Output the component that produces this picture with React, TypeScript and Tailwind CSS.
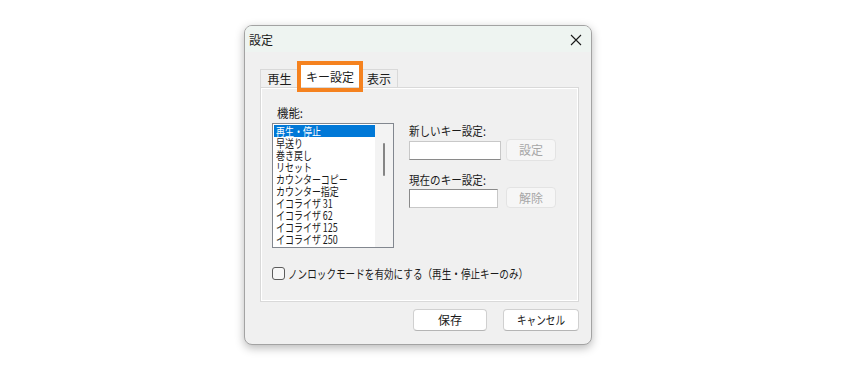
import React from "react";

const items = [
  "再生・停止",
  "早送り",
  "巻き戻し",
  "リセット",
  "カウンターコピー",
  "カウンター指定",
  "イコライザ 31",
  "イコライザ 62",
  "イコライザ 125",
  "イコライザ 250",
];

function N({ children, s }: { children: React.ReactNode; s: string }) {
  return <span className={`inline-block whitespace-nowrap origin-left ${s}`}>{children}</span>;
}

export default function App() {
  return (
    <div className="w-[861px] h-[369px] bg-white pt-[25px] pl-[244px] font-['Noto_Sans_CJK_JP',sans-serif] text-[12px] text-[#1a1a1a] leading-[12px]">
      <div className="w-[348px] h-[320px] rounded-[8px] border border-[#a3a3a3] bg-[#f0f0f0] shadow-[0_3px_10px_rgba(0,0,0,0.28)] overflow-hidden flex flex-col">
        {/* title bar */}
        <div className="h-[26px] bg-[#eef4f1] flex items-center justify-between pl-[4px] pr-[9px]">
          <span className="mt-[1px]">設定</span>
          <svg width="12" height="12" viewBox="0 0 12 12" className="mt-[1px]">
            <path d="M1 1 L11 11 M11 1 L1 11" stroke="#1a1a1a" strokeWidth="1.1" />
          </svg>
        </div>
        {/* body */}
        <div className="flex-1 flex flex-col pl-[15px] pr-[12px] pt-[13px]">
          {/* tabs */}
          <div className="flex items-end h-[22px]">
            <div className="w-[39px] h-[18px] border border-b-0 border-[#d9d9d9] bg-[#f0f0f0] flex items-center justify-center pt-[1px]">再生</div>
            <div className="relative w-[62px] h-[22px] bg-white flex items-center justify-center">
              <span className="mt-[1px]">キー設定</span>
              <div className="absolute left-[-2px] right-[-2px] top-[-4px] bottom-[-5px] border-[4px] border-[#f5821f]" />
            </div>
            <div className="w-[37px] h-[18px] border border-b-0 border-l-0 border-[#d9d9d9] bg-[#f0f0f0] flex items-center justify-center pt-[1px]">表示</div>
          </div>
          {/* panel */}
          <div className="h-[215px] border border-[#d9d9d9] bg-[#f0f0f0] shadow-[inset_1px_1px_0_#ffffff,inset_-1px_-1px_0_#ffffff] px-[11px] pt-[19px]">
            <div className="flex items-start">
              <div className="flex flex-col">
                <div className="pl-[5px] h-[12px]">
                  <N s="scale-x-[0.95]">機能:</N>
                </div>
                <div className="mt-[4px] w-[122px] h-[125px] border border-[#82878f] bg-white flex">
                  <div className="flex-1 pt-[1px] pl-[1px]">
                    {items.map((t, i) => (
                      <div
                        key={t}
                        className={`h-[12px] leading-[12px] pl-[2px] text-[11.5px] ${i === 0 ? "bg-[#0078d7] text-white" : ""}`}
                      >
                        <N s="scale-x-[0.78]">{t}</N>
                      </div>
                    ))}
                  </div>
                  <div className="w-[18px] bg-[#f3f3f3] flex justify-center pt-[19px]">
                    <div className="w-[2px] h-[33px] bg-[#858585] rounded-[1px]" />
                  </div>
                </div>
              </div>
              <div className="ml-[15px] mt-[18px] flex flex-col">
                <div className="h-[12px]">
                  <N s="scale-x-[0.88]">新しいキー設定:</N>
                </div>
                <div className="mt-[2px] flex items-center">
                  <div className="w-[92px] h-[19px] bg-white border border-[#c8c8c8] border-b-[#8a8a8a]" />
                  <div className="ml-[5px] w-[50px] h-[22px] rounded-[4px] border border-[#e3e3e3] bg-[#f6f6f6] flex items-center justify-center text-[#a6a6a6]">設定</div>
                </div>
                <div className="mt-[13px] h-[12px]">
                  <N s="scale-x-[0.88]">現在のキー設定:</N>
                </div>
                <div className="mt-[1px] flex items-end">
                  <div className="w-[89px] h-[19px] bg-white border border-[#8a8a8a] border-r-[#c8c8c8] border-b-[#c8c8c8]" />
                  <div className="ml-[8px] w-[50px] h-[21px] rounded-[4px] border border-[#e3e3e3] bg-[#f6f6f6] flex items-center justify-center text-[#a6a6a6]">解除</div>
                </div>
              </div>
            </div>
            <div className="mt-[19px] flex items-center">
              <div className="shrink-0 w-[13px] h-[13px] rounded-[3px] border border-[#5c5c5c] bg-[#f7f7f7]" />
              <div className="ml-[3px]">
                <N s="scale-x-[0.8]">ノンロックモードを有効にする（再生・停止キーのみ）</N>
              </div>
            </div>
          </div>
          {/* buttons */}
          <div className="mt-[7px] flex justify-end gap-[16px]">
            <div className="w-[74px] h-[22px] rounded-[4px] border border-[#d0d0d0] border-b-[#b5b5b5] bg-white flex items-center justify-center">保存</div>
            <div className="w-[76px] h-[22px] rounded-[4px] border border-[#d0d0d0] border-b-[#b5b5b5] bg-white flex items-center justify-center">
              <span className="inline-block scale-x-[0.8] whitespace-nowrap">キャンセル</span>
            </div>
          </div>
        </div>
      </div>
    </div>
  );
}
